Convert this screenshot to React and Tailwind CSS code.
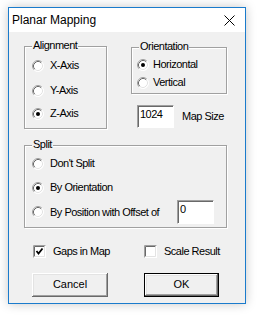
import React from 'react';

// Classic Win32 radio button, drawn as 12x12 svg
function Radio({ checked }) {
  return (
    <svg width="12" height="12" viewBox="0 0 12 12" className="shrink-0">
      <circle cx="6" cy="6" r="5.5" fill="#fff" />
      <path d="M2.11 9.89 A5.5 5.5 0 0 1 9.89 2.11" fill="none" stroke="#a0a0a0" strokeWidth="1" />
      <path d="M2.82 9.18 A4.5 4.5 0 0 1 9.18 2.82" fill="none" stroke="#696969" strokeWidth="1" />
      <path d="M9.89 2.11 A5.5 5.5 0 0 1 2.11 9.89" fill="none" stroke="#fff" strokeWidth="1" />
      <path d="M9.18 2.82 A4.5 4.5 0 0 1 2.82 9.18" fill="none" stroke="#e3e3e3" strokeWidth="1" />
      {checked && <circle cx="6" cy="6" r="2" fill="#000" />}
    </svg>
  );
}

function Checkbox({ checked }) {
  return (
    <svg width="13" height="13" viewBox="0 0 13 13" className="shrink-0">
      <rect x="0" y="0" width="13" height="13" fill="#fff" />
      <path d="M0.5 12.5 V0.5 H12.5" fill="none" stroke="#a0a0a0" />
      <path d="M1.5 11.5 V1.5 H11.5" fill="none" stroke="#696969" />
      <path d="M1.5 11.5 H11.5 V1.5" fill="none" stroke="#e3e3e3" />
      {checked && (
        <path d="M3.5 6 L5.5 8.5 L9.5 3.5" fill="none" stroke="#000" strokeWidth="1.8" />
      )}
    </svg>
  );
}

function Group({ label, className, children }) {
  return (
    <div className={`relative border border-[#a0a0a0] shadow-[inset_1px_1px_0_#fff,1px_1px_0_#fff] ${className}`}>
      {/* legend sits over the top edge */}
      <span className="absolute -top-[8px] left-[7px] bg-[#f0f0f0] px-[1px] leading-[13px]">{label}</span>
      {children}
    </div>
  );
}

function RadioRow({ label, checked, gap = 'gap-[6px]', className = '' }) {
  return (
    <div className={`flex items-center h-[13px] ${gap} ${className}`}>
      <Radio checked={checked} />
      <span className="leading-[13px] whitespace-nowrap">{label}</span>
    </div>
  );
}

function TextBox({ value, className }) {
  return (
    <div className={`bg-white border-t border-l border-[#a0a0a0] border-b border-r border-b-white border-r-white shadow-[inset_1px_1px_0_#696969] pl-[2px] pt-[2px] leading-[13px] ${className}`}>
      {value}
    </div>
  );
}

export default function App() {
  return (
    <div className="w-[257px] h-[315px] bg-white pt-[7px] pl-[8px] text-[11px] text-black" style={{ fontFamily: '"Liberation Sans", Arial, sans-serif' }}>
      <div className="w-[238px] h-[297px] border border-[#1a7bcc] bg-[#f0f0f0] shadow-[0_0_10px_rgba(0,0,0,0.22)] flex flex-col">
        {/* Title bar */}
        <div className="h-[24px] bg-white flex items-center justify-between pl-[3px] pr-[10px] shrink-0">
          <span className="text-[12px]">Planar Mapping</span>
          <svg width="11" height="11" viewBox="0 0 11 11">
            <path d="M0.5 0.5 L10.5 10.5 M10.5 0.5 L0.5 10.5" stroke="#000" strokeWidth="1" />
          </svg>
        </div>

        {/* Body */}
        <div className="pl-[15px] pt-[14px] tracking-[-0.5px]">
          <div className="flex">
            <Group label="Alignment" className="w-[83px] h-[83px] pl-[7px] pt-[12px]">
              <RadioRow label="X-Axis" />
              <RadioRow label="Y-Axis" className="mt-[12px]" />
              <RadioRow label="Z-Axis" checked className="mt-[10px]" />
            </Group>

            <div className="ml-[24px] mt-[1px]">
              <Group label="Orientation" className="w-[96px] h-[47px] pl-[5px] pt-[10px]">
                <RadioRow label="Horizontal" checked gap="gap-[4px]" />
                <RadioRow label="Vertical" gap="gap-[4px]" className="mt-[5px]" />
              </Group>
              <div className="flex items-center mt-[11px] ml-[6px]">
                <TextBox value="1024" className="w-[37px] h-[23px]" />
                <span className="ml-[8px] whitespace-nowrap">Map Size</span>
              </div>
            </div>
          </div>

          <Group label="Split" className="w-[203px] h-[83px] mt-[16px] pl-[7px] pr-[12px] pt-[11px]">
            <RadioRow label="Don't Split" />
            <RadioRow label="By Orientation" checked className="mt-[11px]" />
            <div className="flex items-center mt-[6px] gap-[6px]">
              <Radio />
              <span className="whitespace-nowrap">By Position with Offset of</span>
              <TextBox value="0" className="ml-auto w-[37px] h-[24px] shrink-0" />
            </div>
          </Group>

          <div className="flex items-center mt-[15px] ml-[9px]">
            <div className="flex items-center gap-[7px] w-[111px]">
              <Checkbox checked />
              <span>Gaps in Map</span>
            </div>
            <div className="flex items-center gap-[7px]">
              <Checkbox />
              <span>Scale Result</span>
            </div>
          </div>

          <div className="flex mt-[13px] ml-[8px] tracking-normal">
            <button className="w-[76px] h-[24px] bg-[#f0f0f0] shadow-[inset_-1px_-1px_0_#696969,inset_1px_1px_0_#fff,inset_-2px_-2px_0_#a0a0a0,inset_2px_2px_0_#e3e3e3] flex items-center justify-center">
              Cancel
            </button>
            <button className="ml-[36px] w-[75px] h-[24px] bg-[#f0f0f0] border border-black shadow-[inset_-1px_-1px_0_#696969,inset_1px_1px_0_#fff,inset_-2px_-2px_0_#a0a0a0,inset_2px_2px_0_#e3e3e3] flex items-center justify-center">
              OK
            </button>
          </div>
        </div>
      </div>
    </div>
  );
}
